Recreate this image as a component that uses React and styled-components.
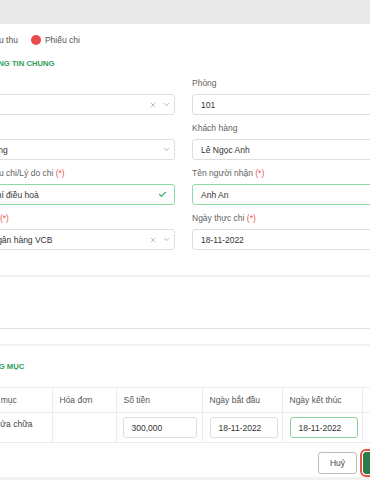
import React from "react";
import styled, { createGlobalStyle } from "styled-components";
import { X, ChevronDown, Check } from "lucide-react";

const GlobalStyle = createGlobalStyle`
  html, body {
    margin: 0;
    padding: 0;
    background: #ffffff;
    overflow: hidden;
  }
  body {
    font-family: "Liberation Sans", Arial, sans-serif;
    color: #333;
  }
`;

const Page = styled.div`
  width: 460px;
  margin-left: -38px;
  height: 480px;
  display: flex;
  flex-direction: column;
`;

const TopBar = styled.div`
  height: 24px;
  background: #e9e9e9;
  flex-shrink: 0;
`;

const Content = styled.div`
  padding: 10px 20px 0;
  display: flex;
  flex-direction: column;
  flex: 1;
`;

const RadioRow = styled.div`
  display: flex;
  align-items: center;
  gap: 13px;
  height: 12px;
  padding-left: 6px;
  margin-left: -20px;
`;

const RadioItem = styled.label`
  display: flex;
  align-items: center;
  gap: 4px;
  font-size: 8.5px;
  color: #555;
`;

const RadioDot = styled.span`
  width: 10px;
  height: 10px;
  border-radius: 50%;
  box-sizing: border-box;
  background: ${(p) => (p.$checked ? "#ea4a4a" : "#fff")};
  border: ${(p) => (p.$checked ? "none" : "1px solid #cfcfcf")};
`;

const SectionTitle = styled.div`
  font-size: 7.7px;
  font-weight: bold;
  color: #2f9d57;
  line-height: 10px;
  height: 10px;
  margin-top: ${(p) => p.$top}px;
  white-space: nowrap;
`;

const FormGrid = styled.div`
  display: grid;
  grid-template-columns: 193px 193px;
  column-gap: 17px;
  row-gap: 8px;
  margin-top: 9px;
`;

const Field = styled.div`
  display: flex;
  flex-direction: column;
`;

const Label = styled.div`
  font-size: 8.5px;
  line-height: 10px;
  height: 10px;
  color: #5f5f5f;
  margin-bottom: 6px;
  white-space: nowrap;
`;

const Req = styled.span`
  color: #ef5350;
`;

const InputBox = styled.div`
  height: 21px;
  box-sizing: border-box;
  border: 1px solid ${(p) => (p.$valid ? "#8fd9a7" : "#dedede")};
  border-radius: 3px;
  display: flex;
  align-items: center;
  padding: 0 3px 0 8px;
  font-size: 8.5px;
  color: #333;
  background: #fff;
  white-space: nowrap;
`;

const Value = styled.span`
  flex: 1;
`;

const Icons = styled.span`
  display: flex;
  align-items: center;
  gap: 5px;
  color: #9a9a9a;
`;

const CheckMark = styled.span`
  display: flex;
  margin-right: 4px;
`;

const Spacer = styled.div`
  margin-top: 25px;
  height: 51px;
  border-top: 2px solid #f1f1f1;
  border-bottom: 1px solid #e2e2e8;
`;

const Band = styled.div`
  margin-top: 15px;
  height: 2px;
  background: #f3f3f3;
`;

const TableWrap = styled.div`
  margin-left: -11px;
  margin-top: 15px;
`;

const Table = styled.table`
  border-collapse: collapse;
  table-layout: fixed;
  width: 451px;
  font-size: 8.5px;
`;

const Th = styled.th`
  text-align: left;
  font-weight: normal;
  color: #555;
  height: 24px;
  padding: 0 7px;
  border-top: 1px solid #ececf0;
  border-bottom: 1px solid #ececf0;
  border-left: 1px solid #ececf0;
  white-space: nowrap;
  &:first-child {
    border-left: none;
  }
`;

const Td = styled.td`
  height: 29px;
  padding: 0 6px;
  border-bottom: 1px solid #ececf0;
  border-left: 1px solid #ececf0;
  vertical-align: ${(p) => (p.$top ? "top" : "middle")};
  color: #444;
  white-space: nowrap;
  &:first-child {
    border-left: none;
  }
`;

const CellText = styled.div`
  padding-top: 6px;
  padding-left: 4px;
`;

const CellInput = styled.div`
  height: 21px;
  width: ${(p) => p.$w}px;
  box-sizing: border-box;
  border: 1px solid ${(p) => (p.$valid ? "#86d39e" : "#dedede")};
  border-radius: 3px;
  display: flex;
  align-items: center;
  padding-left: 8px;
  margin-left: ${(p) => p.$ml || 0}px;
  color: #333;
`;

const Footer = styled.div`
  display: flex;
  justify-content: flex-end;
  gap: 6px;
  margin-top: 9px;
`;

const Button = styled.button`
  height: 22px;
  box-sizing: border-box;
  font-family: inherit;
  font-size: 8.5px;
  border-radius: 3px;
  padding: 0;
  width: ${(p) => p.$w}px;
  background: ${(p) => (p.$primary ? "#2d7a4c" : "#fff")};
  color: ${(p) => (p.$primary ? "#fff" : "#444")};
  border: 1px solid ${(p) => (p.$primary ? "#2d7a4c" : "#bdbdbd")};
  outline: ${(p) => (p.$primary ? "2px solid #e5553c" : "none")};
  outline-offset: 1px;
`;

const BottomBand = styled.div`
  margin-top: auto;
  height: 3px;
  background: #f2f2f2;
  margin-left: -20px;
  margin-right: -20px;
`;

function SelectIcons({ clear }) {
  return (
    <Icons>
      {clear && <X size={8} strokeWidth={2} />}
      <ChevronDown size={9} strokeWidth={2} />
    </Icons>
  );
}

export default function App() {
  return (
    <>
      <GlobalStyle />
      <Page>
        <TopBar />
        <Content>
          <RadioRow>
            <RadioItem>
              <RadioDot />
              Phiếu thu
            </RadioItem>
            <RadioItem>
              <RadioDot $checked />
              Phiếu chi
            </RadioItem>
          </RadioRow>

          <SectionTitle $top={13}>THÔNG TIN CHUNG</SectionTitle>

          <FormGrid>
            <Field>
              <Label>Tòa</Label>
              <InputBox>
                <Value>A</Value>
                <SelectIcons clear />
              </InputBox>
            </Field>
            <Field>
              <Label>Phòng</Label>
              <InputBox>
                <Value>101</Value>
              </InputBox>
            </Field>
            <Field>
              <Label>Loại</Label>
              <InputBox>
                <Value>Ứng</Value>
                <SelectIcons />
              </InputBox>
            </Field>
            <Field>
              <Label>Khách hàng</Label>
              <InputBox>
                <Value>Lê Ngọc Anh</Value>
              </InputBox>
            </Field>
            <Field>
              <Label>
                Phiếu chi/Lý do chi <Req>(*)</Req>
              </Label>
              <InputBox $valid>
                <Value>Phí điều hoà</Value>
                <CheckMark>
                  <Check size={9} strokeWidth={3} color="#35b262" />
                </CheckMark>
              </InputBox>
            </Field>
            <Field>
              <Label>
                Tên người nhận <Req>(*)</Req>
              </Label>
              <InputBox $valid>
                <Value>Anh An</Value>
              </InputBox>
            </Field>
            <Field>
              <Label>
                Quỹ <Req>(*)</Req>
              </Label>
              <InputBox>
                <Value>Ngân hàng VCB</Value>
                <SelectIcons clear />
              </InputBox>
            </Field>
            <Field>
              <Label>
                Ngày thực chi <Req>(*)</Req>
              </Label>
              <InputBox>
                <Value>18-11-2022</Value>
              </InputBox>
            </Field>
          </FormGrid>

          <Spacer />
          <Band />

          <SectionTitle $top={16}>HẠNG MỤC</SectionTitle>

          <TableWrap>
            <Table>
              <colgroup>
                <col style={{ width: 81 }} />
                <col style={{ width: 64 }} />
                <col style={{ width: 86 }} />
                <col style={{ width: 80 }} />
                <col style={{ width: 80 }} />
                <col style={{ width: 60 }} />
              </colgroup>
              <thead>
                <tr>
                  <Th>Danh mục</Th>
                  <Th>Hóa đơn</Th>
                  <Th>Số tiền</Th>
                  <Th>Ngày bắt đầu</Th>
                  <Th>Ngày kết thúc</Th>
                  <Th>Ghi chú</Th>
                </tr>
              </thead>
              <tbody>
                <tr>
                  <Td $top>
                    <CellText>Phí sửa chữa</CellText>
                  </Td>
                  <Td />
                  <Td>
                    <CellInput $w={74}>300,000</CellInput>
                  </Td>
                  <Td>
                    <CellInput $w={68} $ml={1}>18-11-2022</CellInput>
                  </Td>
                  <Td>
                    <CellInput $w={68} $ml={1} $valid>18-11-2022</CellInput>
                  </Td>
                  <Td />
                </tr>
              </tbody>
            </Table>
          </TableWrap>

          <Footer>
            <Button $w={39}>Huỷ</Button>
            <Button $primary $w={39}>Lưu</Button>
          </Footer>

          <BottomBand />
        </Content>
      </Page>
    </>
  );
}
